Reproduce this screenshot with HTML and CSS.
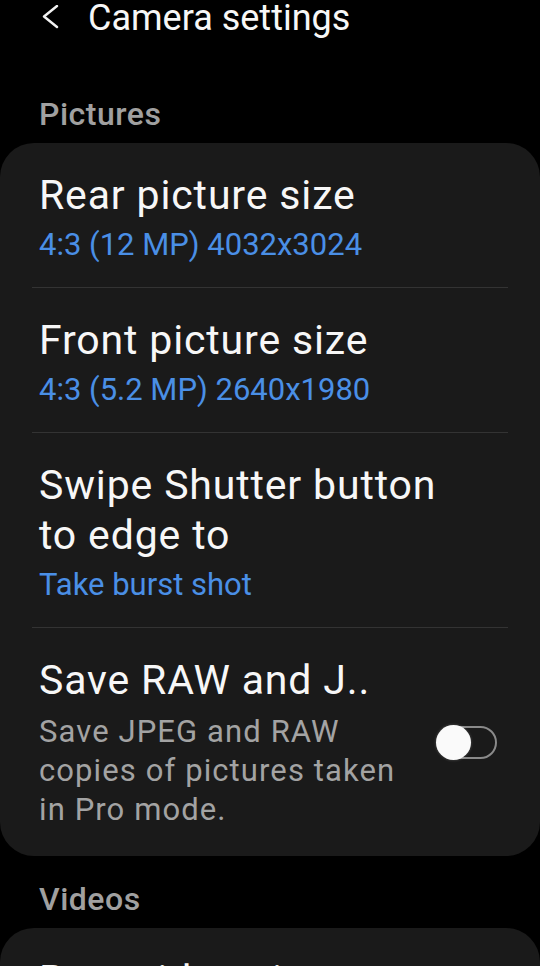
FILE: index.html
```html
<!DOCTYPE html>
<html lang="en">
<head>
<meta charset="utf-8">
<title>Camera settings</title>
<link rel="stylesheet" href="styles.css">
</head>
<body>
<div class="screen">
  <header class="header">
    <svg class="back" width="18" height="24" viewBox="0 0 18 24" aria-hidden="true">
      <polyline points="16,1 3,11.5 16,22" fill="none" stroke="#f2f2f2" stroke-width="2.4" stroke-linecap="round" stroke-linejoin="round"/>
    </svg>
    <h1 class="header-title">Camera settings</h1>
  </header>

  <h2 class="section-label">Pictures</h2>
  <section class="card">
    <div class="item">
      <div class="item-title">Rear picture size</div>
      <div class="item-value">4:3 (12 MP) 4032x3024</div>
    </div>
    <div class="divider"></div>
    <div class="item">
      <div class="item-title">Front picture size</div>
      <div class="item-value">4:3 (5.2 MP) 2640x1980</div>
    </div>
    <div class="divider"></div>
    <div class="item">
      <div class="item-title">Swipe Shutter button<br>to edge to</div>
      <div class="item-value">Take burst shot</div>
    </div>
    <div class="divider"></div>
    <div class="item item-switch">
      <div class="item-text">
        <div class="item-title">Save RAW and J..</div>
        <div class="item-desc">Save JPEG and RAW<br>copies of pictures taken<br>in Pro mode.</div>
      </div>
      <div class="toggle" role="switch" aria-checked="false">
        <span class="toggle-track"></span>
        <span class="toggle-knob"></span>
      </div>
    </div>
  </section>

  <h2 class="section-label section-label-next">Videos</h2>
  <section class="card">
    <div class="item">
      <div class="item-title">Rear video size</div>
      <div class="item-value">16:9 FHD (60 fps) 1920x1080</div>
    </div>
  </section>
</div>
</body>
</html>
```

FILE: styles.css
```css
* {
  box-sizing: border-box;
}

html, body {
  margin: 0;
  padding: 0;
  background: #000;
}

body {
  font-family: Roboto, "Noto Sans", "Liberation Sans", sans-serif;
  color: #f7f7f7;
}

.screen {
  width: 540px;
  height: 966px;
  overflow: hidden;
  background: #000;
}

.header {
  display: flex;
  align-items: flex-start;
  height: 36px;
  padding-left: 41px;
}

.back {
  display: block;
  margin-top: 5px;
  flex: none;
}

.header-title {
  margin: 0 0 0 29px;
  font-size: 36px;
  line-height: 36px;
  font-weight: 400;
  color: #f7f7f7;
}

.section-label {
  margin: 62px 0 13px;
  padding-left: 39px;
  font-size: 32px;
  line-height: 32px;
  font-weight: 500;
  letter-spacing: 0.5px;
  color: #a0a0a0;
}

.section-label-next {
  margin-top: 27px;
}

.card {
  background: #1a1a1a;
  border-radius: 34px;
}

.item {
  padding: 27px 39px 23px;
}

.item-title {
  font-size: 41px;
  line-height: 50px;
  color: #f7f7f7;
  letter-spacing: 0.85px;
}

.item-value {
  margin-top: 5px;
  font-size: 31px;
  line-height: 39px;
  color: #4a8fe6;
}

.item-desc {
  margin-top: 7px;
  font-size: 31px;
  line-height: 39px;
  color: #a3a3a3;
  letter-spacing: 1.1px;
}

.item-switch {
  display: flex;
  align-items: center;
  padding-bottom: 27px;
}

.item-text {
  flex: 1;
}

.divider {
  height: 1px;
  margin: 0 32px;
  background: #333;
}

.toggle {
  position: relative;
  flex: none;
  width: 61px;
  height: 35px;
  margin-right: 4px;
}

.toggle-track {
  position: absolute;
  left: 3px;
  right: 0;
  top: 1px;
  bottom: 1px;
  border: 2px solid #8a8a8a;
  border-radius: 17px;
}

.toggle-knob {
  position: absolute;
  left: 0;
  top: 0;
  width: 35px;
  height: 35px;
  border-radius: 50%;
  background: #fafafa;
  box-shadow: 0 0 3px rgba(255, 255, 255, 0.25);
}
```
